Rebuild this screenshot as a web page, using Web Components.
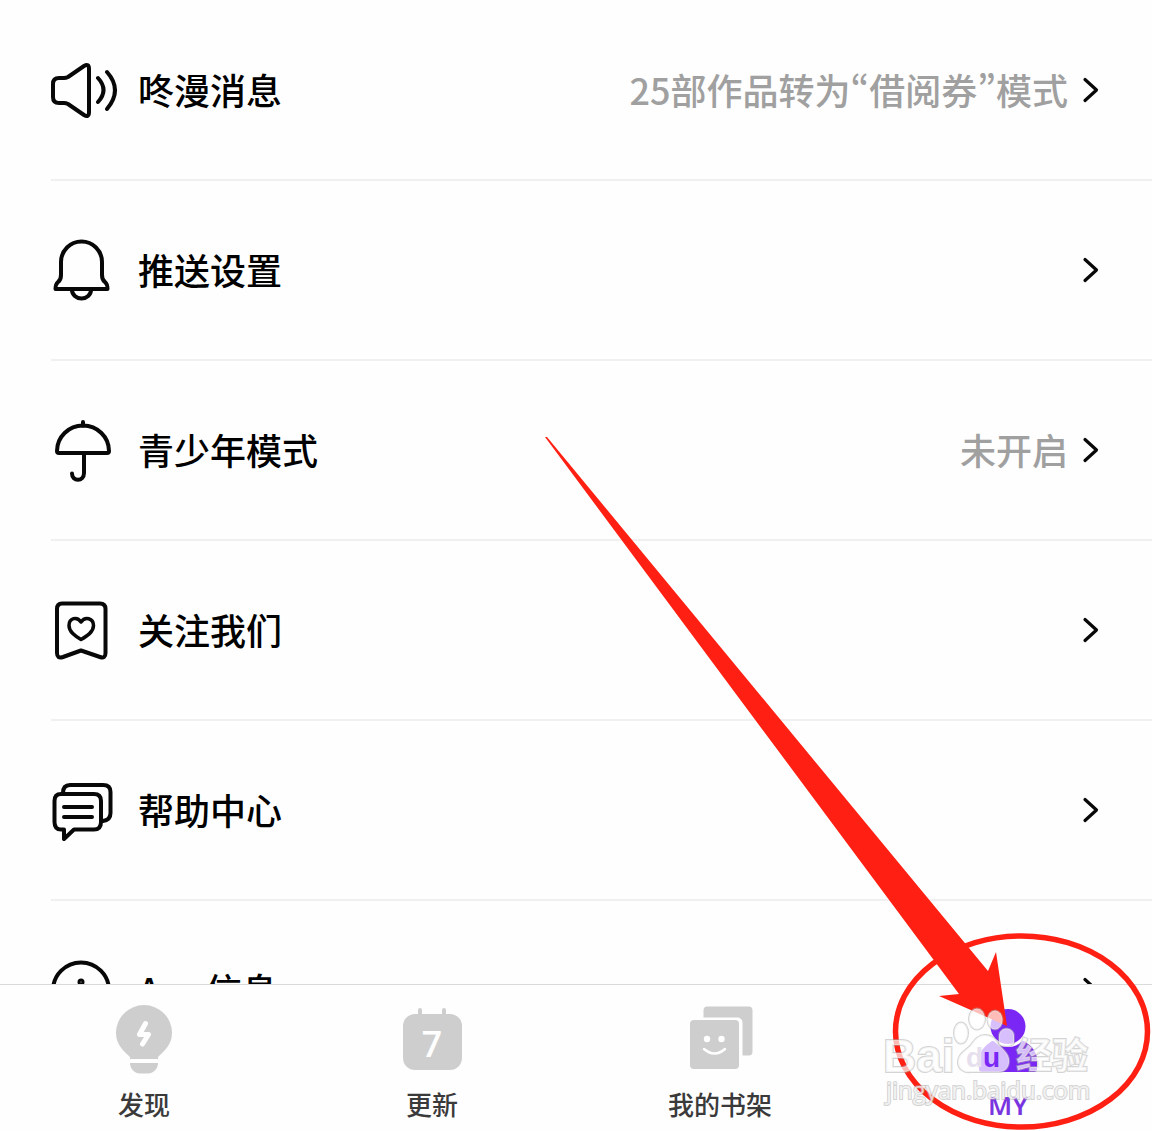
<!DOCTYPE html>
<html lang="zh-CN">
<head>
<meta charset="utf-8">
<meta name="viewport" content="width=device-width, initial-scale=1">
<title>MY</title>
<style>
  body { margin: 0; background: #fefefe; font-family: "Noto Sans CJK SC", sans-serif; }
</style>
</head>
<body>
<my-screen></my-screen>
<script>
const define = (name, html) => {
  const template = document.createElement('template');
  template.innerHTML = html;
  customElements.define(name, class extends HTMLElement {
    constructor() {
      super();
      this.attachShadow({ mode: 'open' }).append(template.content.cloneNode(true));
    }
  });
};

const LINE_ICONS = {
  speaker: '<path d="M8 24H13Q15 24 17 23L33 12Q38 9 38 15V58Q38 64 33 61L17 50Q15 49 13 49H8Q2 49 2 43V30Q2 24 8 24Z"/><path d="M47 24Q58 36 47 48M56 18Q72 36 56 55"/>',
  bell: '<path d="M10 28A20.5 20.5 0 0 1 51 28V41Q51 46 54 48Q56.500 50 56.500 55H4.500Q4.500 50 7 48Q10 46 10 41Z"/><path d="M21 56A9.5 8.5 0 0 0 40 56"/>',
  umbrella: '<path d="M32 8V12M8 39Q6 39 6 37A26 25.500 0 0 1 58 37Q58 39 56 39ZM33 39V59C33 68 21 68 21 59.500"/>',
  bookmark: '<path d="M11 9.500H49Q54.500 9.500 54.500 15V59Q54.500 65 49 63L30 56.500L12 63Q6 65 6 59V15Q6 9.500 11 9.500Z"/><path stroke-width="3.500" d="M30 28C26 22 18 24 18 31.500C18 38 24 42 30 45.500C36 42 42.500 38 42.500 31.500C42.500 24 34 22 30 28Z"/>',
  chat: '<path d="M10 20H43Q50 20 50 27V48Q50 55.500 43 55.500H23L13 65V55.500H10Q3.500 55.500 3.500 48V27Q3.500 20 10 20ZM12 19Q12 11 19 11H52Q59.500 11 59.500 18V39Q59.500 46 52 47M13 33H41M13 43H41"/>',
  info: '<circle cx="30" cy="36.500" r="28"/><circle cx="30" cy="28" r="1.500"/><path d="M30 37V50"/>'
};

const TAB_ICONS = {
  bulb: '<path d="M36 2A28 28 0 0 0 8 30C8 42 16 48 22 54V56H50V54C56 48 64 42 64 30A28 28 0 0 0 36 2ZM22 60H50C50 66 45 70.500 40 70.500H32C27 70.500 22 66 22 60Z"/><path fill="none" stroke="#fff" stroke-width="5" stroke-linecap="round" stroke-linejoin="round" d="M37.500 20.500L31.500 31.500H40.500L34.500 41"/>',
  calendar: '<path stroke="currentColor" stroke-width="4" stroke-linecap="round" d="M24 7V14M48 7V14"/><rect x="7" y="11" width="59" height="56" rx="12"/><text x="36" y="54" fill="#fff" font-family="Roboto, sans-serif" font-size="36" font-weight="500" text-anchor="middle">7</text>',
  shelf: '<rect x="19.500" y="3.500" width="49" height="49" rx="4"/><rect x="4.500" y="14.500" width="54" height="54" rx="5" fill="#fefefe"/><rect x="6" y="17" width="49" height="49" rx="4"/><circle cx="23" cy="36" r="3.200" fill="#fff"/><circle cx="37.500" cy="36" r="3.200" fill="#fff"/><path fill="none" stroke="#fff" stroke-width="2.500" stroke-linecap="round" d="M20 46Q30.500 55 41 46"/>',
  person: '<path d="M20 38Q7 46 7 57V66Q7 69 10 69H62Q65 69 65 66V57Q65 46 52 38Z"/><circle cx="36" cy="23.500" r="20.500" fill="#fefefe"/><circle cx="36" cy="23.500" r="17.500"/>'
};

const iconElement = (name, set, css, viewBox) => customElements.define(name, class extends HTMLElement {
  constructor() {
    super();
    this.attachShadow({ mode: 'open' });
  }
  connectedCallback() {
    this.shadowRoot.innerHTML = `<style>:host{display:block;flex:none}svg{display:block;${css}}</style>
      <svg viewBox="${viewBox}" aria-hidden="true">${set[this.getAttribute('name')]}</svg>`;
  }
});
iconElement('line-icon', LINE_ICONS, 'width:69px;height:72px;fill:none;stroke:#080808;stroke-width:4;stroke-linecap:round;stroke-linejoin:round', '0 0 69 72');
iconElement('tab-icon', TAB_ICONS, 'width:72px;height:72px;fill:currentColor', '0 0 72 72');

define('setting-row', `
  <style>
    :host { display: block; flex: none; margin-left: 51px; }
    a { display: flex; align-items: center; box-sizing: border-box; height: 180px; padding-right: 52px;
        border-bottom: 2px solid #f0f0f0; color: #000; text-decoration: none;
        font-size: 36px; line-height: 52px; font-weight: 500; }
    .label, .value { padding-bottom: 2px; white-space: nowrap; }
    .label { flex: 1; margin-left: 18px; }
    .value { color: #a0a0a0; margin-right: 12px; }
    svg { width: 20px; height: 28px; fill: none; stroke: #080808; stroke-width: 3.200; stroke-linecap: round; stroke-linejoin: round; }
  </style>
  <a href="#">
    <slot name="icon"></slot>
    <span class="label"><slot></slot></span>
    <span class="value"><slot name="value"></slot></span>
    <svg viewBox="0 0 20 28" aria-hidden="true"><path d="M5 3.500L16.500 14L5 24.500"/></svg>
  </a>`);

define('tab-item', `
  <style>
    :host { display: block; flex: 1; color: #cecece; --label: #3a3a3a; }
    :host([active]) { color: #7a26f5; --label: #7a35e0; }
    a { display: flex; flex-direction: column; align-items: center; gap: 9px; padding: 18px 0 6px;
        color: inherit; text-decoration: none; }
    span { color: var(--label); font-size: 26px; line-height: 40px; font-weight: 500; }
    :host([active]) .name { font-family: "Noto Sans", sans-serif; font-weight: 600; }
  </style>
  <a href="#"><slot name="icon"></slot><span><slot class="name"></slot></span></a>`);

define('tab-strip', `
  <style>
    :host { display: block; flex: none; background: #fefefe; border-top: 1px solid #dadada; }
    nav { display: flex; }
  </style>
  <nav><slot></slot></nav>`);

define('guide-marks', `
  <style>
    :host { display: block; position: absolute; inset: 0; pointer-events: none; }
    svg { display: block; width: 100%; height: 100%; }
    .mark { fill: #fff; fill-opacity: .7; stroke: #aaa; stroke-opacity: .5; stroke-width: 2; paint-order: stroke; }
  </style>
  <svg viewBox="0 0 1152 1131">
    <ellipse cx="1021.500" cy="1031.500" rx="126" ry="95.500" fill="none" stroke="#ff2013" stroke-width="5.500"/>
    <path fill="#ff2013" d="M545 437L547 437L988 971L996 952L1007 1026L939 996L959 994Z"/>
    <g class="mark">
      <text x="883" y="1072" font-family="Liberation Sans, sans-serif" font-size="46" font-weight="700">Bai</text>
      <ellipse cx="961" cy="1033" rx="7" ry="10.500"/>
      <ellipse cx="977" cy="1019" rx="8" ry="10.500"/>
      <ellipse cx="995" cy="1020" rx="7.500" ry="9.500"/>
      <path d="M999 1045V1036C999 1026 1014 1026 1014 1036V1043Q1010 1048 999 1045Z"/>
      <path d="M985 1035C977 1035 974 1041 970 1046C965 1051 958 1054 958 1062C958 1069 964 1073 970 1072H999C1006 1072 1010 1066 1009 1059C1008 1052 1001 1048 997 1042Q993 1035 985 1035Z"/>
      <text x="1016" y="1069" font-family="Noto Sans CJK SC, sans-serif" font-size="36" font-weight="700">经验</text>
      <text x="886" y="1099" font-family="Open Sans, sans-serif" font-size="24">jingyan.baidu.com</text>
    </g>
    <text x="966" y="1067" font-family="Liberation Sans, sans-serif" font-size="28" font-weight="700" fill="#e6e0ee">d<tspan fill="#7a26f5">u</tspan></text>
  </svg>`);

define('my-screen', `
  <style>
    :host { display: flex; flex-direction: column; position: relative; height: 100vh; overflow: hidden; }
    main { display: flex; flex-direction: column; flex: 1; min-height: 0; overflow: hidden; padding-top: 1px; }
    q { quotes: none; font-family: "Noto Sans CJK KR", sans-serif; }
    q::before, q::after { content: none; }
  </style>
  <main>
    <setting-row><line-icon slot="icon" name="speaker"></line-icon>咚漫消息<span slot="value">25部作品转为<q lang="ko">“</q>借阅券<q lang="ko">”</q>模式</span></setting-row>
    <setting-row><line-icon slot="icon" name="bell"></line-icon>推送设置</setting-row>
    <setting-row><line-icon slot="icon" name="umbrella"></line-icon>青少年模式<span slot="value">未开启</span></setting-row>
    <setting-row><line-icon slot="icon" name="bookmark"></line-icon>关注我们</setting-row>
    <setting-row><line-icon slot="icon" name="chat"></line-icon>帮助中心</setting-row>
    <setting-row><line-icon slot="icon" name="info"></line-icon>App信息</setting-row>
  </main>
  <tab-strip>
    <tab-item><tab-icon slot="icon" name="bulb"></tab-icon>发现</tab-item>
    <tab-item><tab-icon slot="icon" name="calendar"></tab-icon>更新</tab-item>
    <tab-item><tab-icon slot="icon" name="shelf"></tab-icon>我的书架</tab-item>
    <tab-item active><tab-icon slot="icon" name="person"></tab-icon>MY</tab-item>
  </tab-strip>
  <guide-marks></guide-marks>`);
</script>
</body>
</html>
